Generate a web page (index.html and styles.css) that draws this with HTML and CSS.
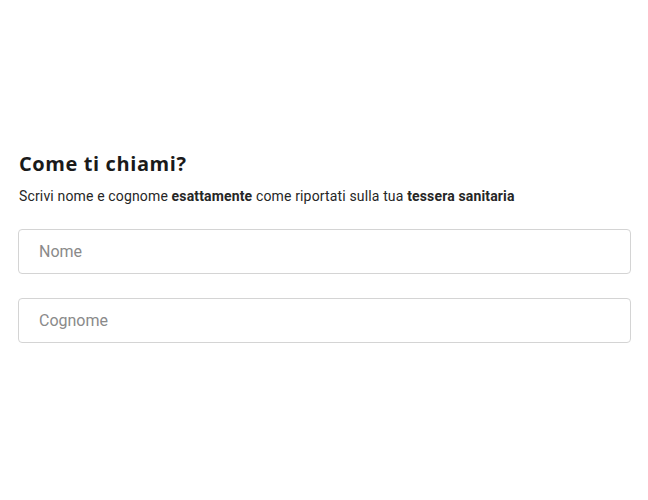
FILE: index.html
```html
<!DOCTYPE html>
<html lang="it">
<head>
    <meta charset="UTF-8">
    <meta name="viewport" content="width=device-width, initial-scale=1.0">
    <title>Come ti chiami?</title>
    <link rel="stylesheet" href="styles.css">
</head>
<body>

    <!-- Step: nome e cognome -->
    <div class="step">
        <h1 class="step-title">Come ti chiami?</h1>
        <p class="step-subtitle">Scrivi nome e cognome <b>esattamente</b> come riportati sulla tua <b>tessera sanitaria</b></p>

        <div class="field-list">
            <input type="text" class="field" placeholder="Nome">
            <input type="text" class="field" placeholder="Cognome">
        </div>
    </div>

</body>
</html>
```

FILE: styles.css
```css
body {
    font-family: Roboto, Arial, sans-serif;
    margin: 0;
    padding: 0;
    background-color: #ffffff;
    color: #1f1f1f;
}
.step {
    padding: 152px 17px 0 18px;
}
.step-title {
    font-family: "Open Sans", Lato, sans-serif;
    font-weight: 700;
    font-size: 20px;
    letter-spacing: 0.6px;
    line-height: 24px;
    margin: 0 0 10px 1px;
    color: #1a1a1a;
}
.step-subtitle {
    font-size: 14px;
    letter-spacing: 0.15px;
    line-height: 20px;
    margin: 0 0 23px 1px;
    color: #262626;
}
.step-subtitle b {
    font-weight: 700;
}
.field-list {
    display: flex;
    flex-direction: column;
    gap: 24px;
}
.field {
    height: 45px;
    box-sizing: border-box;
    border: 1px solid #d4d4d4;
    border-radius: 4px;
    padding: 0 20px;
    font-family: Roboto, Arial, sans-serif;
    font-size: 16px;
    color: #222;
    outline: none;
}
.field::placeholder {
    color: #8a8a8a;
}
```
